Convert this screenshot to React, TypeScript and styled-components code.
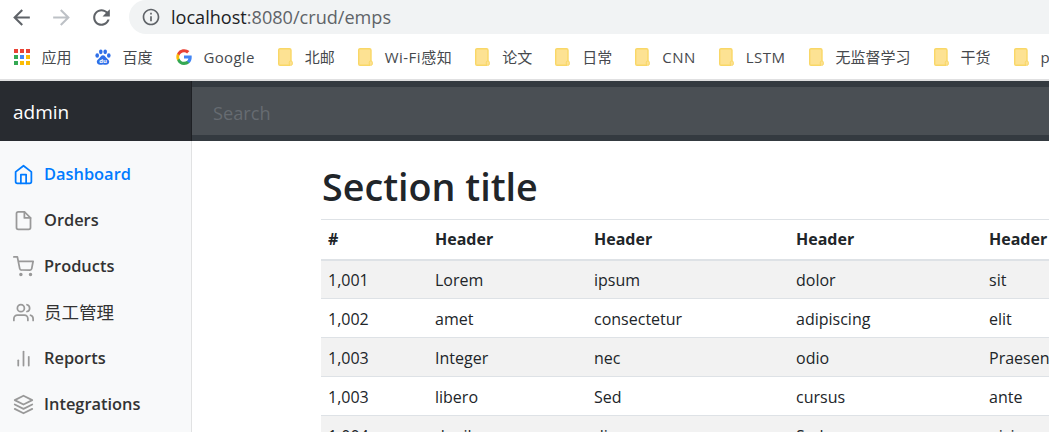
import styled, { createGlobalStyle } from "styled-components";

const GlobalStyle = createGlobalStyle`
  html, body {
    margin: 0;
    padding: 0;
    height: 432px;
    overflow: hidden;
    background: #fff;
    font-family: "Open Sans", "Noto Sans CJK SC", sans-serif;
  }
  * { box-sizing: border-box; }
`;

const Page = styled.div`
  width: 1049px;
  height: 432px;
  display: flex;
  flex-direction: column;
  overflow: hidden;
`;

// Browser chrome
const Chrome = styled.div`
  height: 81px;
  flex: none;
  background: #fff;
  border-bottom: 2px solid #e0e0e1;
`;

const Toolbar = styled.div`
  height: 34px;
  display: flex;
  align-items: center;
  padding-left: 9px;
`;

const ToolIcon = styled.svg<{ $muted?: boolean }>`
  width: 25px;
  height: 25px;
  flex: none;
  margin-right: 15px;
  fill: ${(p) => (p.$muted ? "#bdc1c6" : "#5f6368")};
`;

const AddressBar = styled.div`
  flex: 1;
  height: 34px;
  display: flex;
  align-items: center;
  gap: 10px;
  padding-left: 12px;
  background: #f1f3f4;
  border-radius: 17px 0 0 17px;
`;

const InfoIcon = styled.svg`
  width: 20px;
  height: 20px;
  fill: #5f6368;
`;

const Url = styled.div`
  font-size: 18.1px;
  color: #5f6368;

  b {
    font-weight: 400;
    color: #202124;
  }
`;

const Bookmarks = styled.div`
  height: 45px;
  display: flex;
  align-items: center;
  gap: 23px;
  padding-left: 13.5px;
  white-space: nowrap;
`;

const Bookmark = styled.div<{ $spacing?: number }>`
  display: flex;
  align-items: center;
  gap: 12px;
  flex: none;
  font-size: 15px;
  letter-spacing: ${(p) => p.$spacing ?? 0}px;
  color: #46494d;
`;

const BookmarkIcon = styled.svg`
  width: 16px;
  height: 16px;
  flex: none;
`;

const FolderIcon = styled.svg`
  width: 15px;
  height: 18px;
  flex: none;
`;

// Bootstrap dashboard
const Navbar = styled.header`
  height: 60px;
  flex: none;
  display: flex;
  background: #343a40;
`;

const Brand = styled.div`
  width: 192px;
  display: flex;
  align-items: center;
  padding: 1px 0 0 13px;
  font-size: 19px;
  color: #fff;
  background: #282b30;
  box-shadow: inset -1px 0 0 rgba(0, 0, 0, 0.25);
`;

const SearchBox = styled.div`
  flex: 1;
  margin: 6px 0;
  display: flex;
  align-items: center;
  padding: 3px 0 0 21px;
  font-size: 18.2px;
  color: #666b71;
  background: #4a4f54;
`;

const Body = styled.div`
  flex: 1;
  display: flex;
  min-height: 0;
`;

const Sidebar = styled.nav`
  width: 192px;
  flex: none;
  padding-top: 9px;
  background: #f8f9fa;
  border-right: 1px solid #e1e2e3;
`;

const NavItem = styled.a<{ $active?: boolean; $cjk?: boolean }>`
  height: 46px;
  display: flex;
  align-items: center;
  gap: 10px;
  padding-left: 13px;
  font-size: ${(p) => (p.$cjk ? "17.5px" : "16.4px")};
  font-weight: ${(p) => (p.$cjk ? 400 : 540)};
  color: ${(p) => (p.$active ? "#007bff" : "#333")};

  svg {
    width: 21px;
    height: 21px;
    flex: none;
    margin-top: 2px;
    fill: none;
    stroke: ${(p) => (p.$active ? "#007bff" : "#999")};
    stroke-width: 2;
    stroke-linecap: round;
    stroke-linejoin: round;
  }
`;

const Main = styled.main`
  flex: 1;
  min-width: 0;
  padding: 18px 0 0 129px;
`;

const Title = styled.h2`
  margin: 0 0 4px 1px;
  height: 56px;
  font-size: 37.7px;
  line-height: 56px;
  font-weight: 600;
  color: #212529;
  white-space: nowrap;
`;

const Table = styled.table`
  width: 1000px;
  table-layout: fixed;
  border-collapse: collapse;
  font-size: 16px;
  color: #212529;
`;

const Col = styled.col<{ $width: number }>`
  width: ${(p) => p.$width}px;
`;

const HeadCell = styled.th`
  height: 40px;
  padding: 0 6px;
  text-align: left;
  font-weight: 700;
  border-top: 1px solid #dee2e6;
  border-bottom: 2px solid #dee2e6;
  white-space: nowrap;

  &:first-child {
    padding-left: 7px;
  }
`;

const Row = styled.tr`
  &:nth-child(odd) {
    background: #f2f2f2;
  }
`;

const Cell = styled.td`
  height: 39px;
  padding: 2px 6px 0;
  border-bottom: 1px solid #dee2e6;
  white-space: nowrap;

  &:first-child {
    padding-left: 7px;
  }
`;

const columns = [108, 159, 202, 193, 338];

const rows = [
  ["1,001", "Lorem", "ipsum", "dolor", "sit"],
  ["1,002", "amet", "consectetur", "adipiscing", "elit"],
  ["1,003", "Integer", "nec", "odio", "Praesent"],
  ["1,003", "libero", "Sed", "cursus", "ante"],
  ["1,004", "dapibus", "diam", "Sed", "nisi"],
];

const folders = [
  { name: "北邮" },
  { name: "Wi-Fi感知", spacing: 0.5 },
  { name: "论文" },
  { name: "日常" },
  { name: "CNN", spacing: 0.5 },
  { name: "LSTM", spacing: 0.5 },
  { name: "无监督学习" },
  { name: "干货" },
  { name: "python", spacing: 0.5 },
];

const appColors = [
  ["#ea4335", "#ea4335", "#ea4335"],
  ["#34a853", "#4285f4", "#fbbc05"],
  ["#34a853", "#fbbc05", "#fbbc05"],
];

function Folder() {
  return (
    <FolderIcon viewBox="0 0 15 18">
      <path d="M2 .7h9.5a1.5 1.5 0 0 1 1.5 1.5v11.8l-1.5 3.3H2A1.3 1.3 0 0 1 .7 16V2A1.3 1.3 0 0 1 2 .7z" fill="#fde293" stroke="#f9d767" strokeWidth="1.4" />
      <rect x="11.3" y="13" width="3" height="4.3" rx="1.2" fill="#fde293" stroke="#f9d767" />
    </FolderIcon>
  );
}

export default function App() {
  return (
    <Page>
      <GlobalStyle />
      <Chrome>
        <Toolbar>
          <ToolIcon viewBox="0 0 24 24">
            <path d="M20 11H7.83l5.59-5.59L12 4l-8 8 8 8 1.41-1.41L7.83 13H20v-2z" />
          </ToolIcon>
          <ToolIcon viewBox="0 0 24 24" $muted>
            <path d="M12 4l-1.41 1.41L16.17 11H4v2h12.17l-5.58 5.59L12 20l8-8z" />
          </ToolIcon>
          <ToolIcon viewBox="0 0 24 24">
            <path d="M17.65 6.35C16.2 4.9 14.21 4 12 4c-4.42 0-7.99 3.58-7.99 8s3.57 8 7.99 8c3.73 0 6.84-2.55 7.73-6h-2.08c-.82 2.33-3.04 4-5.65 4-3.31 0-6-2.69-6-6s2.69-6 6-6c1.66 0 3.14.69 4.22 1.78L13 11h7V4l-2.35 2.35z" />
          </ToolIcon>
          <AddressBar>
            <InfoIcon viewBox="0 0 24 24">
              <path d="M11 7h2v2h-2zm0 4h2v6h-2zm1-9C6.48 2 2 6.48 2 12s4.48 10 10 10 10-4.48 10-10S17.52 2 12 2zm0 18c-4.41 0-8-3.59-8-8s3.59-8 8-8 8 3.59 8 8-3.59 8-8 8z" />
            </InfoIcon>
            <Url>
              <b>localhost</b>:8080/crud/emps
            </Url>
          </AddressBar>
        </Toolbar>
        <Bookmarks>
          <Bookmark>
            <BookmarkIcon viewBox="0 0 16 16">
              {appColors.map((line, y) =>
                line.map((color, x) => (
                  <rect key={`${x}-${y}`} x={x * 6} y={y * 6} width="4" height="4" fill={color} />
                ))
              )}
            </BookmarkIcon>
            应用
          </Bookmark>
          <Bookmark>
            <BookmarkIcon viewBox="0 0 16 16">
              <g fill="#2f6fe8">
                <ellipse cx="2.2" cy="6.5" rx="1.8" ry="2.2" />
                <ellipse cx="5.8" cy="2.8" rx="1.8" ry="2.4" />
                <ellipse cx="10.2" cy="2.8" rx="1.8" ry="2.4" />
                <ellipse cx="13.8" cy="6.5" rx="1.8" ry="2.2" />
                <path d="M8 6.2c2 0 2.6 2 4 3.2 1.6 1.3 2.2 2.2 2.2 3.4 0 1.9-1.6 3-3.2 3-1.2 0-2-.4-3-.4s-1.8.4-3 .4c-1.6 0-3.2-1.1-3.2-3 0-1.2.6-2.1 2.2-3.4C5.400 8.200 6 6.200 8 6.200z" />
              </g>
              <text x="8" y="14" textAnchor="middle" fontSize="6" fontWeight="700" fill="#fff">du</text>
            </BookmarkIcon>
            百度
          </Bookmark>
          <Bookmark $spacing={0.3}>
            <BookmarkIcon viewBox="0 0 16 16">
              <path d="M15.7 8.2c0-.6 0-1.100-.1-1.600H8v3h4.400a3.800 3.800 0 0 1-1.600 2.500v2h2.600c1.500-1.400 2.300-3.400 2.300-5.900z" fill="#4285f4" />
              <path d="M8 16c2.200 0 4-.7 5.400-2l-2.600-2c-.7.500-1.700.8-2.800.8-2.100 0-3.900-1.400-4.600-3.400H1.200v2.100A8 8 0 0 0 8 16z" fill="#34a853" />
              <path d="M3.400 9.400a4.800 4.800 0 0 1 0-3V4.300H1.200a8 8 0 0 0 0 7.200z" fill="#fbbc05" />
              <path d="M8 3.200c1.200 0 2.300.4 3.100 1.200l2.300-2.300A8 8 0 0 0 1.200 4.300l2.200 2.100C4.100 4.600 5.900 3.200 8 3.200z" fill="#ea4335" />
            </BookmarkIcon>
            Google
          </Bookmark>
          {folders.map((folder) => (
            <Bookmark key={folder.name} $spacing={folder.spacing}>
              <Folder />
              {folder.name}
            </Bookmark>
          ))}
        </Bookmarks>
      </Chrome>

      <Navbar>
        <Brand>admin</Brand>
        <SearchBox>Search</SearchBox>
      </Navbar>

      <Body>
        <Sidebar>
          <NavItem $active>
            <svg viewBox="0 0 24 24">
              <path d="M3 9l9-7 9 7v11a2 2 0 0 1-2 2H5a2 2 0 0 1-2-2z" />
              <polyline points="9 22 9 12 15 12 15 22" />
            </svg>
            Dashboard
          </NavItem>
          <NavItem>
            <svg viewBox="0 0 24 24">
              <path d="M13 2H6a2 2 0 0 0-2 2v16a2 2 0 0 0 2 2h12a2 2 0 0 0 2-2V9z" />
              <polyline points="13 2 13 9 20 9" />
            </svg>
            Orders
          </NavItem>
          <NavItem>
            <svg viewBox="0 0 24 24">
              <circle cx="9" cy="21" r="1" />
              <circle cx="20" cy="21" r="1" />
              <path d="M1 1h4l2.680 13.390a2 2 0 0 0 2 1.610h9.720a2 2 0 0 0 2-1.610L23 6H6" />
            </svg>
            Products
          </NavItem>
          <NavItem $cjk>
            <svg viewBox="0 0 24 24">
              <path d="M17 21v-2a4 4 0 0 0-4-4H5a4 4 0 0 0-4 4v2" />
              <circle cx="9" cy="7" r="4" />
              <path d="M23 21v-2a4 4 0 0 0-3-3.870" />
              <path d="M16 3.130a4 4 0 0 1 0 7.750" />
            </svg>
            员工管理
          </NavItem>
          <NavItem>
            <svg viewBox="0 0 24 24">
              <line x1="18" y1="20" x2="18" y2="10" />
              <line x1="12" y1="20" x2="12" y2="4" />
              <line x1="6" y1="20" x2="6" y2="14" />
            </svg>
            Reports
          </NavItem>
          <NavItem>
            <svg viewBox="0 0 24 24">
              <polygon points="12 2 2 7 12 12 22 7 12 2" />
              <polyline points="2 17 12 22 22 17" />
              <polyline points="2 12 12 17 22 12" />
            </svg>
            Integrations
          </NavItem>
        </Sidebar>

        <Main>
          <Title>Section title</Title>
          <Table>
            <colgroup>
              {columns.map((width, i) => (
                <Col key={i} $width={width} />
              ))}
            </colgroup>
            <thead>
              <tr>
                <HeadCell>#</HeadCell>
                <HeadCell>Header</HeadCell>
                <HeadCell>Header</HeadCell>
                <HeadCell>Header</HeadCell>
                <HeadCell>Header</HeadCell>
              </tr>
            </thead>
            <tbody>
              {rows.map((row, i) => (
                <Row key={i}>
                  {row.map((text, j) => (
                    <Cell key={j}>{text}</Cell>
                  ))}
                </Row>
              ))}
            </tbody>
          </Table>
        </Main>
      </Body>
    </Page>
  );
}
